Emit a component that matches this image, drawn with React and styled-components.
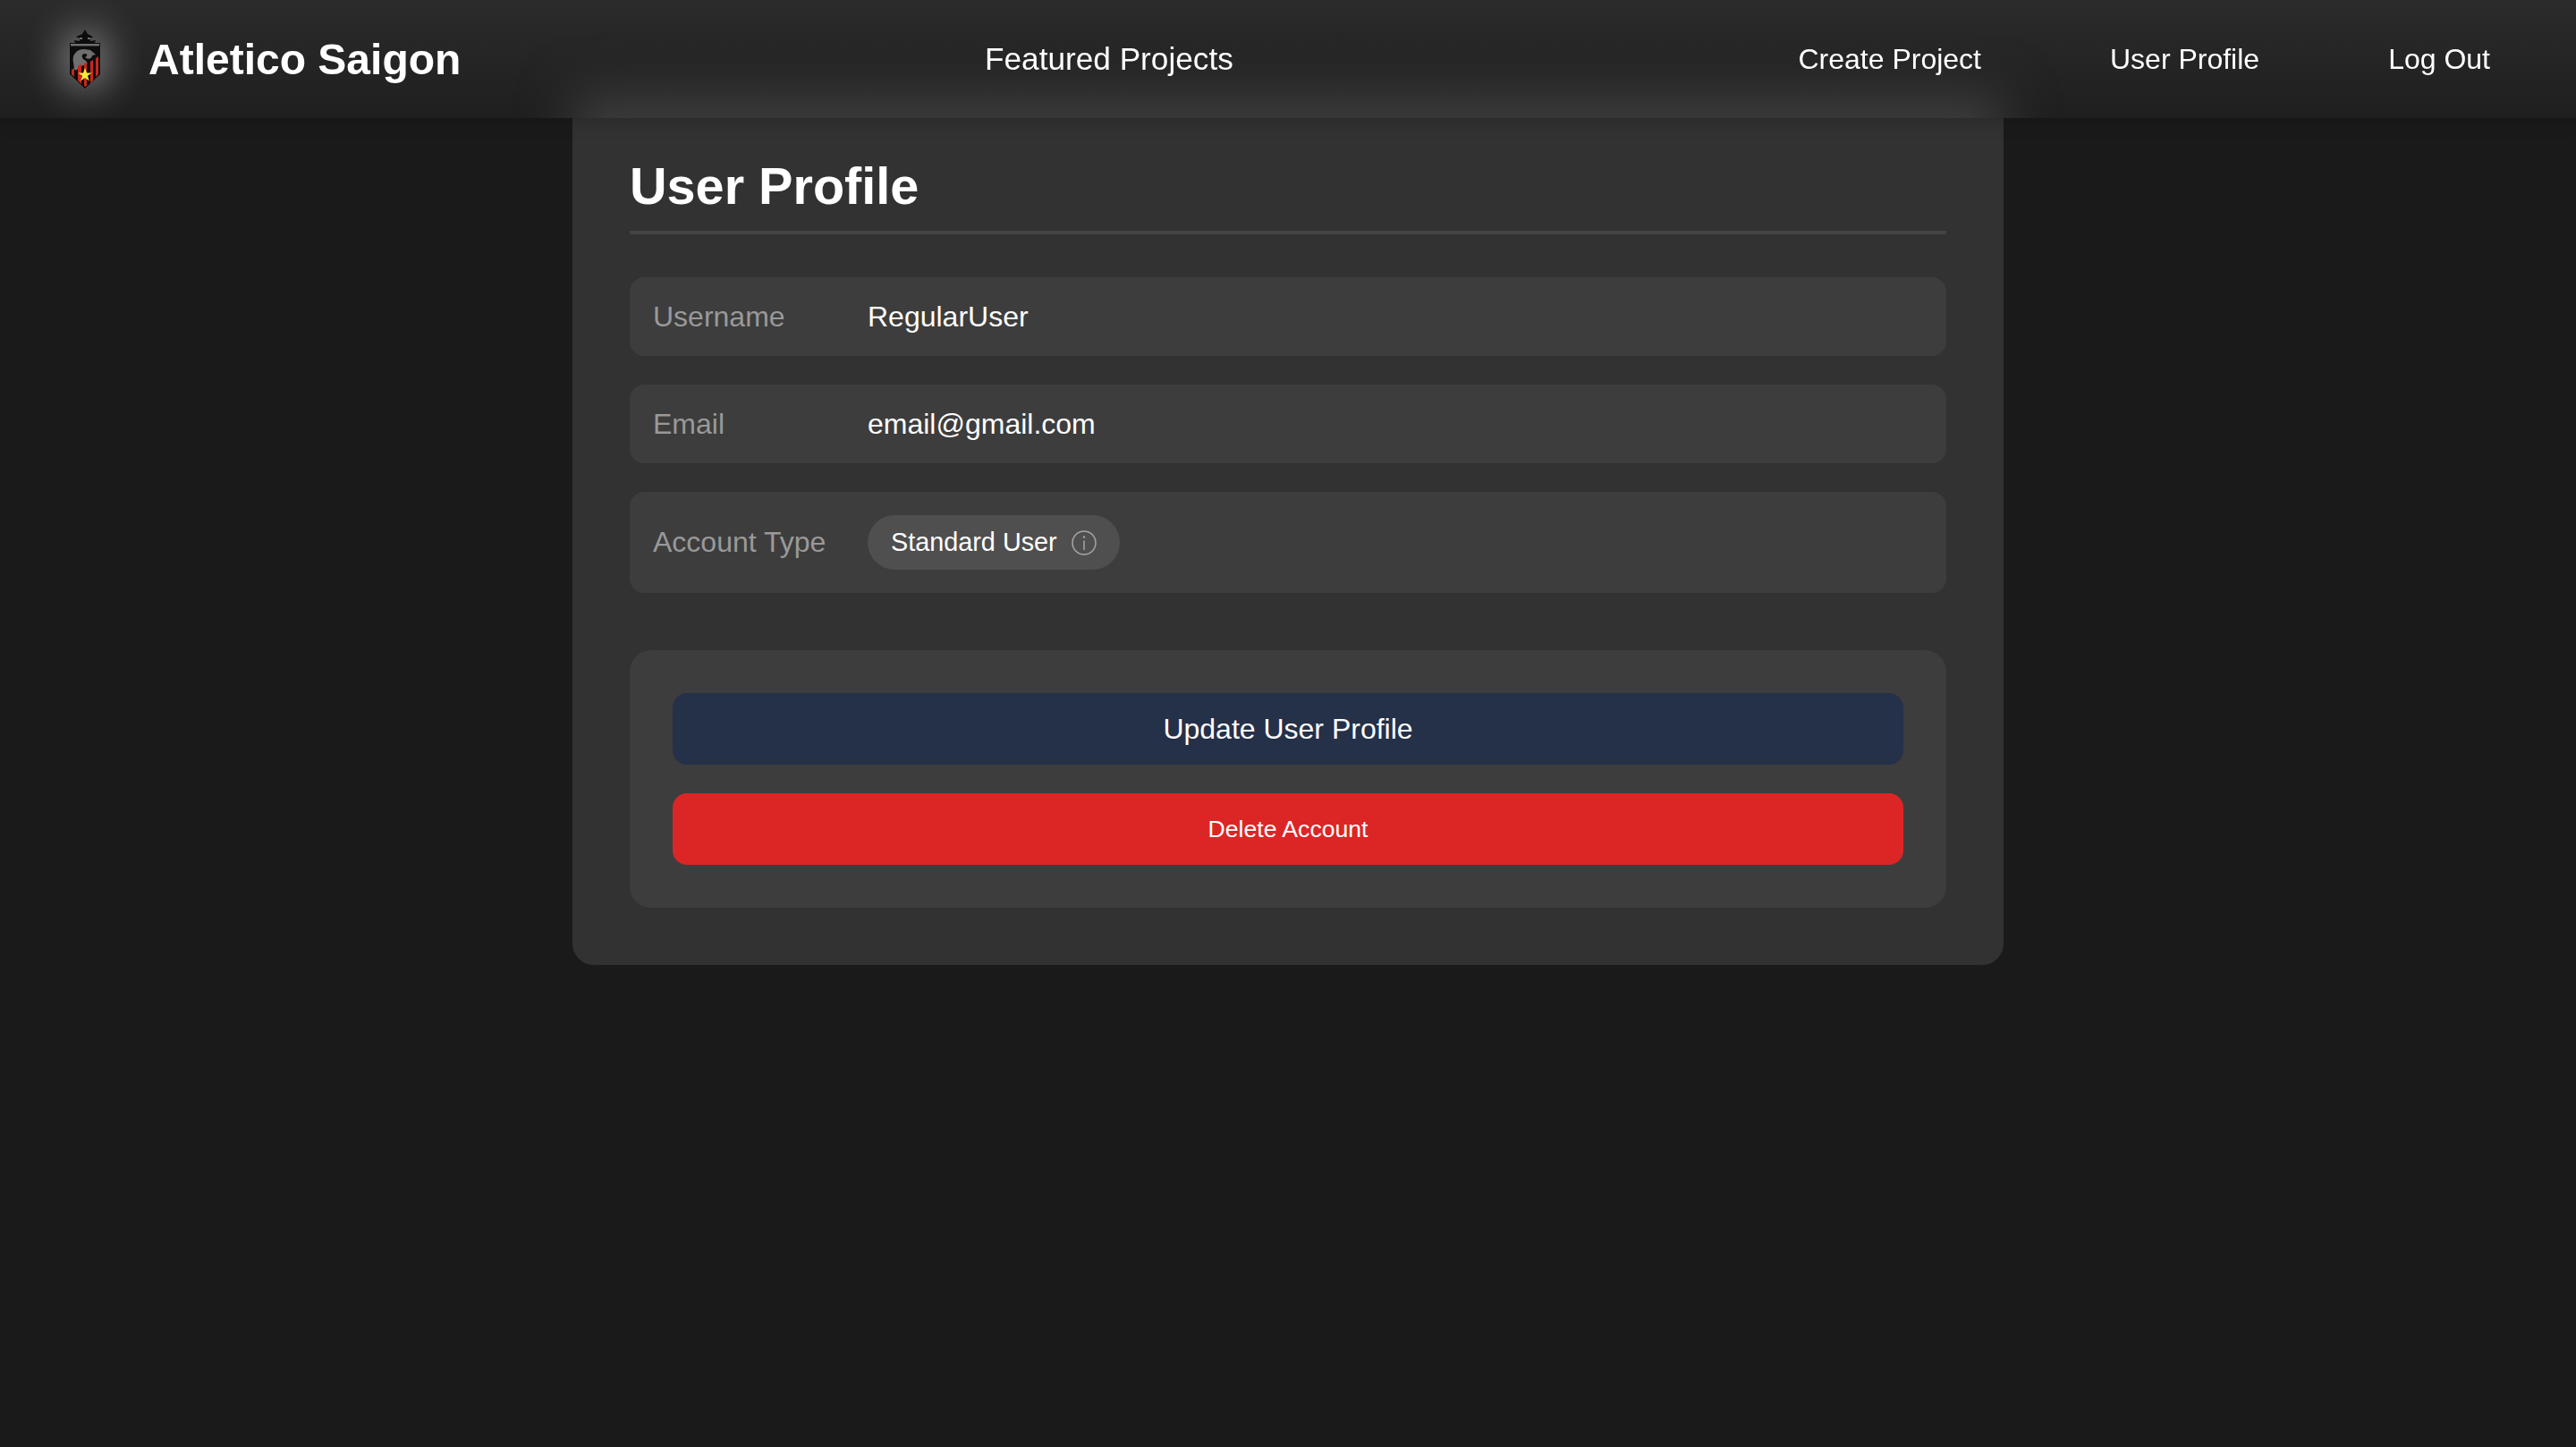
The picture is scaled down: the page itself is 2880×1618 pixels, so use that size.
import styled, { createGlobalStyle } from "styled-components";

const GlobalStyle = createGlobalStyle`
  html, body {
    margin: 0;
    padding: 0;
    background: #1a1a1a;
    font-family: "Liberation Sans", Arial, sans-serif;
  }
`;

const Page = styled.div`
  min-height: 1618px;
  box-sizing: border-box;
  padding-top: 110px;
`;

const NavBar = styled.nav`
  position: fixed;
  top: 0;
  left: 0;
  right: 0;
  height: 132px;
  box-sizing: border-box;
  padding: 0 24px;
  display: flex;
  align-items: center;
  justify-content: space-between;
  background: linear-gradient(180deg, #2b2b2b, #1f1f1f);
  box-shadow: 0 2px 20px rgba(0, 0, 0, 0.2);
  z-index: 10;
`;

const NavGlowClip = styled.div`
  position: absolute;
  inset: 0;
  overflow: hidden;
  &::before {
    content: "";
    position: absolute;
    top: 104px;
    left: 50%;
    width: 1600px;
    height: 200px;
    margin-left: -800px;
    background: #3d3d3d;
    filter: blur(28px);
  }
`;

const Brand = styled.div`
  position: relative;
  display: flex;
  align-items: center;
  padding-right: 26px;
`;

const LogoBox = styled.div`
  width: 142px;
  display: flex;
  justify-content: center;
  svg {
    display: block;
    filter: drop-shadow(0 0 24px rgba(255, 255, 255, 0.75));
  }
`;

const BrandName = styled.span`
  color: #fff;
  font-size: 48px;
  font-weight: 700;
`;

const NavGroup = styled.div`
  position: relative;
  display: flex;
  align-items: center;
`;

const NavLink = styled.a`
  position: relative;
  color: #fff;
  font-size: ${(p) => (p.$featured ? "35.2px" : "32px")};
  padding: 0 72px;
`;

const Card = styled.main`
  width: 1600px;
  margin: 0 auto;
  box-sizing: border-box;
  padding: 64px;
  background: #323232;
  border-radius: 24px;
`;

const Heading = styled.h1`
  margin: 0 0 48px;
  padding-bottom: 15px;
  color: #fff;
  font-size: 57.6px;
  line-height: 1.2;
  font-weight: 700;
  border-bottom: 4px solid #444;
`;

const Rows = styled.div`
  display: flex;
  flex-direction: column;
  gap: 32px;
`;

const Row = styled.div`
  display: flex;
  align-items: center;
  min-height: 88px;
  padding: ${(p) => (p.$tall ? "26px" : "0")} 26px;
  box-sizing: border-box;
  background: #3d3d3d;
  border-radius: 16px;
`;

const Label = styled.span`
  width: 240px;
  color: #999;
  font-size: 32px;
`;

const Value = styled.span`
  color: #fff;
  font-size: 32px;
`;

const Pill = styled.span`
  display: inline-flex;
  align-items: center;
  gap: 16px;
  height: 61px;
  padding: 0 26px;
  box-sizing: border-box;
  background: #4f4f4f;
  border-radius: 31px;
  color: #fff;
  font-size: 28.8px;
  svg {
    color: #a6a6a6;
  }
`;

const Actions = styled.section`
  margin-top: 64px;
  padding: 48px;
  display: flex;
  flex-direction: column;
  gap: 32px;
  background: #3d3d3d;
  border-radius: 24px;
`;

const Button = styled.button`
  height: 80px;
  border: none;
  border-radius: 16px;
  color: #fff;
  font-family: inherit;
  font-size: ${(p) => (p.$danger ? "26.6px" : "32px")};
  background: ${(p) => (p.$danger ? "#dc2626" : "#253049")};
`;

const InfoIcon = () => (
  <svg width="28" height="28" viewBox="0 0 28 28" fill="none" stroke="currentColor" strokeWidth="1.5">
    <circle cx="14" cy="14" r="13" />
    <path d="M14 11.5 V22" />
    <circle cx="14" cy="7.5" r="1.2" fill="currentColor" stroke="none" />
  </svg>
);

const Crest = () => (
  <svg width="36" height="66" viewBox="0 0 36 66">
    {/* pagoda roof + shield */}
    <path d="M18 0 L21 5 L27 8 L24 10 L24 13 L30 12 L29 15 L35 15 L35 50 L18 66 L1 50 L1 15 L7 15 L6 12 L12 13 L12 10 L8 8 L15 5 Z" fill="#0d0d0d" />
    <rect x="12" y="9" width="3" height="2" fill="#6d6d6d" />
    <rect x="21" y="9" width="3" height="2" fill="#6d6d6d" />
    <rect x="2" y="16" width="32" height="2.4" fill="#707070" />
    {/* dragon */}
    <path d="M5 37 C3 28 9 22 17 22 L24 23 L30 28 L26 29 C26 33 21 34 18 31 C21 30 21 27 18 27 C13 27 14 33 19 35 L21 38 C16 40 11 42 8 46 L6 44 Z" fill="#6f6f6f" />
    {/* stripes */}
    <path d="M3 45 L6 43 L6 53 L3 50 Z M10 41 L14 39 L14 61 L10 57 Z M17 38 L20 37 L20 63 L18 64 L17 63 Z M24 36 L27 34 L27 57 L24 60 Z M30 32 L33 30 L33 50 L30 53 Z" fill="#c9261d" />
    <path d="M18 43 L20 48.4 L25.6 48.4 L21 51.8 L22.8 57.4 L18 54 L13.2 57.4 L15 51.8 L10.4 48.4 L16 48.4 Z" fill="#f5ea3a" />
  </svg>
);

export default function App() {
  return (
    <Page>
      <GlobalStyle />
      <NavBar>
        <NavGlowClip />
        <Brand>
          <LogoBox>
            <Crest />
          </LogoBox>
          <BrandName>Atletico Saigon</BrandName>
        </Brand>
        <NavLink $featured>Featured Projects</NavLink>
        <NavGroup>
          <NavLink>Create Project</NavLink>
          <NavLink>User Profile</NavLink>
          <NavLink>Log Out</NavLink>
        </NavGroup>
      </NavBar>
      <Card>
        <Heading>User Profile</Heading>
        <Rows>
          <Row>
            <Label>Username</Label>
            <Value>RegularUser</Value>
          </Row>
          <Row>
            <Label>Email</Label>
            <Value>email@gmail.com</Value>
          </Row>
          <Row $tall>
            <Label>Account Type</Label>
            <Pill>
              Standard User
              <InfoIcon />
            </Pill>
          </Row>
        </Rows>
        <Actions>
          <Button>Update User Profile</Button>
          <Button $danger>Delete Account</Button>
        </Actions>
      </Card>
    </Page>
  );
}
